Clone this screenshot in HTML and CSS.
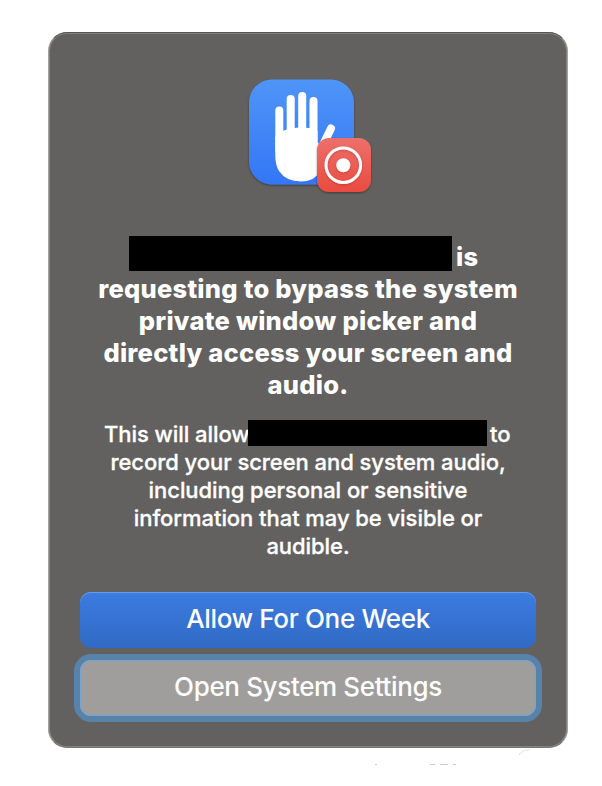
FILE: index.html
```html
<!DOCTYPE html>
<html lang="en">
<head>
<meta charset="utf-8">
<title>Screen access request</title>
<link rel="stylesheet" href="styles.css">
</head>
<body>
<main class="dialog">
  <svg class="icon" width="130" height="122" viewBox="245 75 130 122" aria-hidden="true">
    <defs>
      <linearGradient id="blue" x1="0" y1="0" x2="0" y2="1"><stop offset="0" stop-color="#4f95f8"/><stop offset="1" stop-color="#3376f5"/></linearGradient>
      <linearGradient id="red" x1="0" y1="0" x2="0" y2="1"><stop offset="0" stop-color="#ec706c"/><stop offset="1" stop-color="#ea4b3e"/></linearGradient>
      <filter id="shadow" x="-20%" y="-20%" width="140%" height="140%"><feDropShadow dx="0" dy="1" stdDeviation="1.3" flood-color="#000" flood-opacity=".4"/></filter>
      <filter id="ring-shadow" x="-20%" y="-20%" width="140%" height="140%"><feDropShadow dx="0" dy="1" stdDeviation="1" flood-color="#7a1010" flood-opacity=".3"/></filter>
    </defs>
    <rect x="249" y="79.500" width="105" height="105" rx="23" fill="url(#blue)" filter="url(#shadow)"/>
    <g fill="none" stroke="#fff" stroke-width="8" stroke-linecap="round">
      <path d="M279.300 110.500V150M290.700 99V150M302.200 96V150M313.500 101V150"/>
      <path d="M331 128.500L319 153"/>
    </g>
    <path fill="#fff" d="M275.300 137Q282 128 301 127.600Q312 127.600 317.500 131V142.500L322 146L327 154L321 170Q315 181.500 301 181.500Q286 181.500 279 171Q275.300 165 275.300 156Z"/>
    <rect x="317" y="138" width="54" height="54" rx="12" fill="url(#red)" filter="url(#shadow)"/>
    <g filter="url(#ring-shadow)"><circle cx="343.300" cy="165.200" r="17.300" fill="none" stroke="#fff" stroke-width="3"/><circle cx="343.300" cy="165.200" r="7" fill="#fff"/></g>
  </svg>
  <h1 class="title">
    <span class="line t1"><i class="redacted app-name"></i><span>is</span></span>
    <span class="line t2">requesting to bypass the system</span>
    <span class="line t3">private window picker and</span>
    <span class="line t4">directly access your screen and</span>
    <span class="line t5">audio.</span>
  </h1>
  <p class="message">
    <span class="line m1"><span>This will allow</span><i class="redacted app-ref"></i><span>to</span></span>
    <span class="line m2">record your screen and system audio,</span>
    <span class="line m3">including personal or sensitive</span>
    <span class="line m4">information that may be visible or</span>
    <span class="line m5">audible.</span>
  </p>
  <div class="actions">
    <button class="button primary">Allow For One Week</button>
    <button class="button focused">Open System Settings</button>
  </div>
</main>
<svg class="specks" width="160" height="20" viewBox="370 748 160 20" aria-hidden="true">
  <path d="M519 754.500L524 750.500L535 749" fill="none" stroke="#bbb" stroke-width=".7" stroke-dasharray="2 1"/>
  <path d="M375 764.500h2M430 764.500h5M440 764.500h8M453 764.500h3" stroke="#ccc" stroke-width="1"/>
</svg>
</body>
</html>
```

FILE: styles.css
```css
* { box-sizing: border-box; }
body {
  margin: 0;
  padding: 32px 34px 0 48px;
  height: 786px;
  overflow: hidden;
  background: #fff;
  font-family: Inter, "Liberation Sans", sans-serif;
  color: #fff;
}
.dialog {
  width: 520px;
  height: 716px;
  padding: 43px 32px 0;
  border: 1px solid #444;
  border-color: #555 #a0a0a0 #777 #a0a0a0;
  border-radius: 19px;
  background: #62615f;
  box-shadow: inset 0 0 0 1px #828280;
  display: flex;
  flex-direction: column;
  align-items: center;
}
.icon { display: block; margin: -1px 0 0 4px; flex: none; }
.title, .message { margin: 0; width: 100%; text-align: center; white-space: nowrap; }
.title {
  margin-top: 44px;
  font-size: 25.500px;
  line-height: 32px;
  font-weight: 800;
  letter-spacing: .25px;
}
.line { display: block; }
.redacted { display: block; background: #000; flex: none; }
.t1, .m1 { display: flex; }
.t1 { height: 32px; gap: 4px; padding-left: 48px; }
.app-name { width: 323px; height: 35px; margin-top: -5px; }
.message {
  margin-top: 19px;
  font-size: 22px;
  line-height: 28px;
  font-weight: 500;
  letter-spacing: -.06px;
  -webkit-text-stroke: .3px #fff;
}
.m1 { height: 28px; padding-left: 23px; }
.m1 span:first-child { width: 144px; }
.app-ref { width: 239px; height: 26px; margin-right: 3px; }
.actions {
  width: 456px;
  margin-top: 32px;
  display: flex;
  flex-direction: column;
  gap: 12px;
}
.button {
  height: 56px;
  padding: 0 0 3px;
  border: 0;
  border-radius: 11px;
  color: #fff;
  font: 500 26px/53px Inter, "Liberation Sans", sans-serif;
  letter-spacing: -.35px;
}
.primary {
  background: linear-gradient(#3c7be1, #316ac4);
  box-shadow: inset 0 1px #639bea;
}
.focused {
  background: #9f9e9c;
  box-shadow: inset 0 0 0 1px #76a5d2, 0 0 0 6px #5783ab;
}
.specks { display: block; margin-left: 322px; }
```
